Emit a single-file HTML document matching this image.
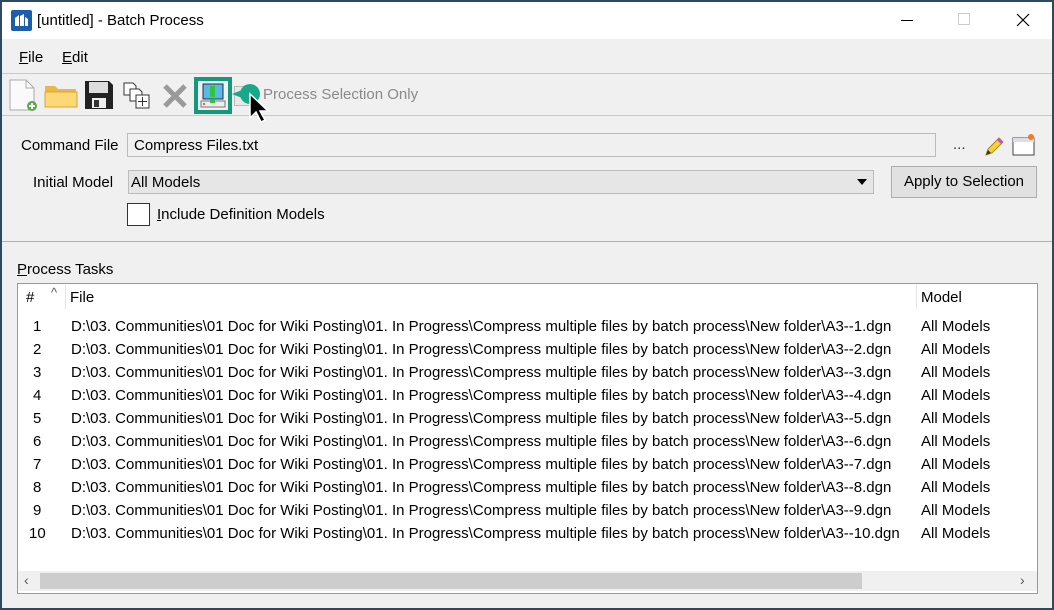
<!DOCTYPE html>
<html><head><meta charset="utf-8"><style>
*{margin:0;padding:0;box-sizing:border-box}
body{width:1054px;height:610px;background:#2c4a63;font-family:"Liberation Sans",sans-serif;font-size:14px;color:#000;overflow:hidden;position:relative}
.win{position:absolute;left:2px;top:2px;width:1050px;height:606px;background:#f0f0f0}
.a{position:absolute;white-space:nowrap}
.title{left:0;top:0;width:1050px;height:37px;background:#fff}
.rows div{position:absolute;white-space:nowrap;font-size:15px}
</style></head><body>
<div class="win">
<div class="a title"></div>
<svg class="a" style="left:9px;top:8px" width="21" height="21"><rect width="21" height="21" rx="2" fill="#1d5ea8"/><path d="M4 16 L4 8 L8 5 L8 16 M9 16 L9 6 L13 4 L13 16 M14 16 L14 7 L17 9 L17 16Z" fill="#fff"/></svg>
<div class="a" style="left:35px;top:10px;font-size:15px">[untitled] - Batch Process</div>
<div class="a" style="left:899px;top:18px;width:12px;height:1px;background:#000"></div>
<div class="a" style="left:956px;top:11px;width:12px;height:12px;border:1px solid #ccc"></div>
<svg class="a" style="left:1014px;top:11px" width="14" height="14"><path d="M1 1L13 13M13 1L1 13" stroke="#000" stroke-width="1.2"/></svg>
<div class="a" style="left:17px;top:47px;font-size:15px"><u>F</u>ile</div>
<div class="a" style="left:60px;top:47px;font-size:15px"><u>E</u>dit</div>
<div class="a" style="left:0;top:71px;width:1050px;height:1px;background:#c8c8c8"></div>
<div class="a" style="left:0;top:113px;width:1050px;height:1px;background:#c8c8c8"></div>
<svg class="a" style="left:6px;top:76px" width="32" height="34"><path d="M2 2h16l8 8v22H2z" fill="#fafafa" stroke="#aaa"/><path d="M18 2v8h8" fill="none" stroke="#aaa"/><circle cx="24" cy="28" r="5" fill="#5aa84a"/><path d="M21 28h6M24 25v6" stroke="#fff" stroke-width="2"/></svg>
<svg class="a" style="left:42px;top:80px" width="34" height="26"><path d="M1 4h10l3 3h18v18H1z" fill="#e8b84a"/><rect x="1" y="10" width="32" height="15" fill="#fcd877" stroke="#d9a53a"/></svg>
<svg class="a" style="left:82px;top:78px" width="30" height="30"><path d="M1 1h24l4 4v24H1z" fill="#222"/><rect x="5" y="2" width="19" height="11" fill="#ddd"/><rect x="8" y="18" width="14" height="10" fill="#eee"/><rect x="10" y="20" width="5" height="7" fill="#333"/></svg>
<svg class="a" style="left:121px;top:80px" width="28" height="28"><path d="M1 1h9l3 3v9H1z" fill="#fff" stroke="#333"/><path d="M7 7h9l3 3v9H7z" fill="#fff" stroke="#333"/><rect x="13" y="13" width="13" height="13" fill="#fff" stroke="#333"/><path d="M19.5 15v9M15 19.5h9" stroke="#333"/></svg>
<svg class="a" style="left:160px;top:82px" width="26" height="24"><path d="M3 2L23 22M23 2L3 22" stroke="#9a9a9a" stroke-width="5"/></svg>
<div class="a" style="left:192px;top:75px;width:38px;height:37px;border:4px solid #139a7c;background:#f0f0f0"></div>
<svg class="a" style="left:198px;top:81px" width="26" height="26"><rect x="3" y="1" width="20" height="15" fill="#5ab7ea" stroke="#234"/><rect x="1" y="18" width="24" height="6" fill="#eee" stroke="#777"/><rect x="10" y="3" width="5" height="11" fill="#32c23b"/><rect x="10" y="16" width="5" height="4" fill="#32c23b"/><circle cx="4" cy="21" r="1" fill="#c33"/></svg>
<div class="a" style="left:232px;top:84px;width:22px;height:20px;border:1px solid #bbb;background:#e8e8e8"></div>
<svg class="a" style="left:228px;top:80px" width="46" height="48"><path d="M2 12 L22 4 L22 20Z" fill="#1aa88b"/><circle cx="20" cy="12" r="10" fill="#1aa88b"/><path d="M20 12 v24 l6-6 l5 10 l4-2 l-5-9 h8z" fill="#000" stroke="#fff" stroke-width="1.5"/></svg>
<div class="a" style="left:261px;top:84px;font-size:15px;color:#8a8a8a">Process Selection Only</div>
<div class="a" style="left:19px;top:135px;font-size:15px">Command File</div>
<div class="a" style="left:125px;top:131px;width:809px;height:24px;border:1px solid #bbb;background:#f0f0f0;font-size:15px;padding:3px 6px">Compress Files.txt</div>
<div class="a" style="left:951px;top:134px;font-size:15px;color:#333">...</div>
<svg class="a" style="left:981px;top:134px" width="22" height="22"><path d="M3 19 L5 13 L16 2 L20 6 L9 17Z" fill="#f5d23a" stroke="#a88a1a"/><path d="M16 2L20 6L18 8L14 4z" fill="#c84fc8"/><path d="M3 19L5 14L8 17Z" fill="#333"/></svg>
<svg class="a" style="left:1010px;top:131px" width="24" height="24"><rect x="1" y="5" width="21" height="17" fill="#fff" stroke="#444"/><rect x="1" y="5" width="21" height="4" fill="#dde"/><circle cx="19" cy="4" r="3" fill="#f57a1a"/></svg>
<div class="a" style="left:31px;top:172px;font-size:15px">Initial Model</div>
<div class="a" style="left:126px;top:168px;width:746px;height:24px;border:1px solid #bbb;background:#e6e6e6;font-size:15px;padding:3px 2px">All Models</div>
<svg class="a" style="left:855px;top:177px" width="10" height="6"><path d="M0 0h10L5 6z" fill="#000"/></svg>
<div class="a" style="left:889px;top:164px;width:146px;height:32px;border:1px solid #adadad;background:#e1e1e1;font-size:15px;text-align:center;line-height:30px">Apply to Selection</div>
<div class="a" style="left:125px;top:201px;width:23px;height:23px;border:1px solid #333;background:#fff"></div>
<div class="a" style="left:155px;top:204px;font-size:15px"><u>I</u>nclude Definition Models</div>
<div class="a" style="left:0;top:239px;width:1050px;height:1px;background:#b0b0b0"></div>
<div class="a" style="left:15px;top:259px;font-size:15px"><u>P</u>rocess Tasks</div>
<div class="a" style="left:15px;top:281px;width:1021px;height:311px;border:1px solid #999;background:#fff"></div>
<div class="a" style="left:63px;top:283px;width:1px;height:24px;background:#e5e5e5"></div>
<div class="a" style="left:914px;top:283px;width:1px;height:24px;background:#e5e5e5"></div>
<div class="a" style="left:24px;top:287px;font-size:15px">#</div>
<div class="a" style="left:49px;top:283px;font-size:13px;color:#555">^</div>
<div class="a" style="left:68px;top:287px;font-size:15px">File</div>
<div class="a" style="left:919px;top:287px;font-size:15px">Model</div>
<div class="rows" style="position:absolute;left:0;top:0">
<div style="left:31px;top:316px">1</div><div style="left:69px;top:316px">D:\03. Communities\01 Doc for Wiki Posting\01. In Progress\Compress multiple files by batch process\New folder\A3--1.dgn</div><div style="left:919px;top:316px">All Models</div>
<div style="left:31px;top:339px">2</div><div style="left:69px;top:339px">D:\03. Communities\01 Doc for Wiki Posting\01. In Progress\Compress multiple files by batch process\New folder\A3--2.dgn</div><div style="left:919px;top:339px">All Models</div>
<div style="left:31px;top:362px">3</div><div style="left:69px;top:362px">D:\03. Communities\01 Doc for Wiki Posting\01. In Progress\Compress multiple files by batch process\New folder\A3--3.dgn</div><div style="left:919px;top:362px">All Models</div>
<div style="left:31px;top:385px">4</div><div style="left:69px;top:385px">D:\03. Communities\01 Doc for Wiki Posting\01. In Progress\Compress multiple files by batch process\New folder\A3--4.dgn</div><div style="left:919px;top:385px">All Models</div>
<div style="left:31px;top:408px">5</div><div style="left:69px;top:408px">D:\03. Communities\01 Doc for Wiki Posting\01. In Progress\Compress multiple files by batch process\New folder\A3--5.dgn</div><div style="left:919px;top:408px">All Models</div>
<div style="left:31px;top:431px">6</div><div style="left:69px;top:431px">D:\03. Communities\01 Doc for Wiki Posting\01. In Progress\Compress multiple files by batch process\New folder\A3--6.dgn</div><div style="left:919px;top:431px">All Models</div>
<div style="left:31px;top:454px">7</div><div style="left:69px;top:454px">D:\03. Communities\01 Doc for Wiki Posting\01. In Progress\Compress multiple files by batch process\New folder\A3--7.dgn</div><div style="left:919px;top:454px">All Models</div>
<div style="left:31px;top:477px">8</div><div style="left:69px;top:477px">D:\03. Communities\01 Doc for Wiki Posting\01. In Progress\Compress multiple files by batch process\New folder\A3--8.dgn</div><div style="left:919px;top:477px">All Models</div>
<div style="left:31px;top:500px">9</div><div style="left:69px;top:500px">D:\03. Communities\01 Doc for Wiki Posting\01. In Progress\Compress multiple files by batch process\New folder\A3--9.dgn</div><div style="left:919px;top:500px">All Models</div>
<div style="left:27px;top:523px">10</div><div style="left:69px;top:523px">D:\03. Communities\01 Doc for Wiki Posting\01. In Progress\Compress multiple files by batch process\New folder\A3--10.dgn</div><div style="left:919px;top:523px">All Models</div>
</div>
<div class="a" style="left:16px;top:569px;width:1019px;height:20px;background:#f0f0f0"></div>
<div class="a" style="left:38px;top:571px;width:822px;height:16px;background:#cdcdcd"></div>
<div class="a" style="left:22px;top:570px;font-size:14px;color:#555">‹</div>
<div class="a" style="left:1018px;top:570px;font-size:14px;color:#555">›</div>
</div>
</body></html>
